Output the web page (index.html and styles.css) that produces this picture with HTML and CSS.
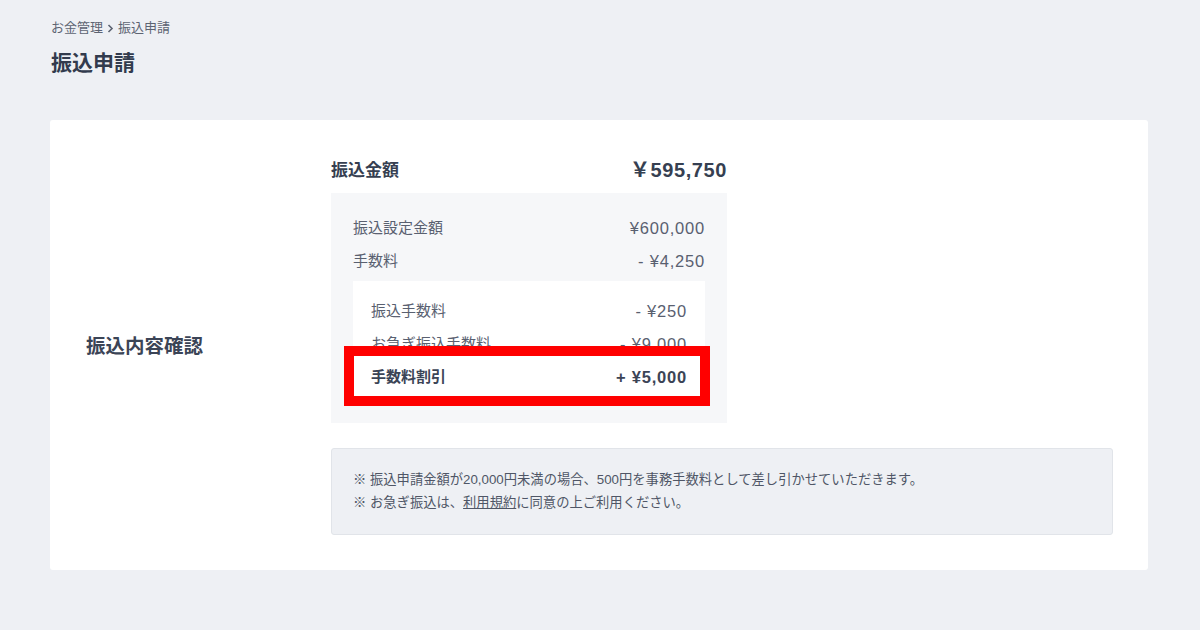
FILE: index.html
```html
<!DOCTYPE html>
<html lang="ja">
<head>
<meta charset="utf-8">
<title>振込申請</title>
<link rel="stylesheet" href="styles.css">
</head>
<body>
<div class="page">
  <nav class="breadcrumb">
    <span>お金管理</span>
    <svg class="chev" width="7" height="9" viewBox="0 0 7 9"><path d="M1.5 1 L5 4.5 L1.5 8" fill="none" stroke="#5d6472" stroke-width="1.6"/></svg>
    <span>振込申請</span>
  </nav>
  <h1 class="title">振込申請</h1>

  <section class="card">
    <div class="card-label">振込内容確認</div>
    <div class="card-body">
      <div class="total-row">
        <span class="total-label">振込金額</span>
        <span class="total-value">￥595,750</span>
      </div>
      <div class="breakdown">
        <div class="row"><span>振込設定金額</span><span class="num">¥600,000</span></div>
        <div class="row"><span>手数料</span><span class="num">- ¥4,250</span></div>
        <div class="sub">
          <div class="row"><span>振込手数料</span><span class="num">- ¥250</span></div>
          <div class="row"><span>お急ぎ振込手数料</span><span class="num">- ¥9,000</span></div>
          <div class="row row-strong highlight"><span>手数料割引</span><span class="num">+ ¥5,000</span></div>
        </div>
      </div>
      <div class="notice">
        <p>※ 振込申請金額が20,000円未満の場合、500円を事務手数料として差し引かせていただきます。</p>
        <p>※ お急ぎ振込は、<a class="link">利用規約</a>に同意の上ご利用ください。</p>
      </div>
    </div>
  </section>
</div>
</body>
</html>
```

FILE: styles.css
```css
* { box-sizing: border-box; }
html, body { margin: 0; padding: 0; }
body {
  background: #eef0f4;
  font-family: "Liberation Sans", "Noto Sans CJK JP", sans-serif;
  color: #3b4456;
  width: 1200px;
  height: 630px;
  overflow: hidden;
}
.page { padding: 19px 52px 0 50px; }

.breadcrumb {
  display: flex;
  align-items: center;
  gap: 4px;
  font-size: 13px;
  line-height: 18px;
  color: #5d6472;
  padding-left: 1px;
}
.chev { display: block; }

.title {
  margin: 12px 0 0 1px;
  font-size: 21px;
  line-height: 28px;
  font-weight: 700;
  color: #323b4d;
}

.card {
  margin-top: 43px;
  width: 1098px;
  height: 450px;
  background: #fff;
  border-radius: 3px;
  display: flex;
  align-items: stretch;
}
.card-label {
  width: 281px;
  padding-left: 36px;
  display: flex;
  align-items: center;
  font-size: 19.5px;
  font-weight: 700;
  color: #3b4456;
  padding-bottom: 2px;
}
.card-body {
  padding: 34px 35px 35px 0;
  flex: 1;
}

.total-row {
  width: 396px;
  height: 28px;
  display: flex;
  justify-content: space-between;
  align-items: center;
  margin-bottom: 11px;
}
.total-label { font-size: 17px; font-weight: 700; color: #363f51; }
.total-value { font-size: 20px; font-weight: 700; color: #363f51; letter-spacing: 0.6px; }

.breakdown {
  width: 396px;
  background: #f6f7f9;
  padding: 22px 22px 22px;
}
.row {
  height: 24px;
  display: flex;
  justify-content: space-between;
  align-items: center;
  font-size: 15px;
  color: #596070;
  margin-bottom: 9px;
}
.row > span:first-child { position: relative; top: -1px; }
.row .num { font-size: 16.5px; letter-spacing: 0.8px; position: relative; top: 1px; }
.sub {
  background: #fff;
  padding: 17px 18px 13px;
}
.sub .row:last-child { margin-bottom: 0; }
.row-strong { font-weight: 700; color: #3b4456; }

.highlight {
  position: relative;
  z-index: 1;
}
.highlight::before {
  content: "";
  position: absolute;
  left: -27px;
  right: -23px;
  top: -18px;
  bottom: -18px;
  border: 10px solid #ff0000;
  background: #fff;
  z-index: -1;
}

.notice {
  margin-top: 25px;
  background: #eef0f4;
  border: 1px solid #e1e4e9;
  border-radius: 3px;
  height: 87px;
  padding: 19px 21px;
  font-size: 13.3px;
  line-height: 23px;
  color: #4f5666;
}
.notice p { margin: 0; }
.link { text-decoration: underline; color: #4f5666; }
```
